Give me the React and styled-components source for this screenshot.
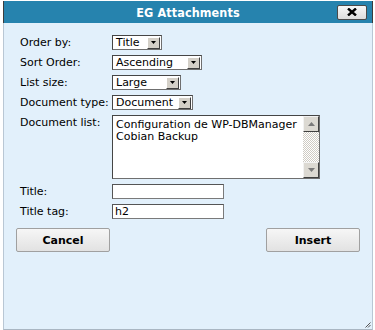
import React from "react";
import styled, { createGlobalStyle } from "styled-components";

const Global = createGlobalStyle`
  html, body { margin: 0; padding: 0; background: #fff; }
  body { font-family: "DejaVu Sans", Verdana, sans-serif; font-size: 11px; color: #000; }
  * { box-sizing: border-box; }
`;

const Page = styled.div`
  width: 375px;
  height: 330px;
  padding: 1px 2px 0 3px;
  overflow: hidden;
`;

const Dialog = styled.div`
  width: 370px;
  height: 329px;
  display: flex;
  flex-direction: column;
`;

const TitleBar = styled.div`
  height: 22px;
  flex: none;
  background: #2683ae;
  border-left: 1px solid #3c3c3c;
  border-right: 1px solid #3c3c3c;
  display: grid;
  grid-template-columns: 1fr auto 1fr;
  align-items: center;
`;

const Title = styled.div`
  grid-column: 2;
  color: #fff;
  font-family: "DejaVu Sans Condensed", "DejaVu Sans", sans-serif;
  font-stretch: condensed;
  font-weight: bold;
  font-size: 12.5px;
  letter-spacing: 0.1px;
`;

const CloseButton = styled.button`
  grid-column: 3;
  justify-self: end;
  margin-right: 5px;
  width: 30px;
  height: 15px;
  padding: 0;
  border: 1px solid #4a4a4a;
  border-radius: 2px;
  background: linear-gradient(#f7f7f7, #dcdcdc);
  display: flex;
  align-items: center;
  justify-content: center;
`;

const Content = styled.div`
  flex: 1;
  position: relative;
  background: #e2f0fb;
  border-left: 1px solid #b9c7d4;
  border-right: 1px solid #b9c7d4;
  border-bottom: 1px solid #a9b6c2;
  padding: 12px 12px 0 12px;
`;

const Form = styled.div`
  display: grid;
  grid-template-columns: 92px 1fr;
  row-gap: 5px;
  align-items: center;
  padding-left: 4px;
`;

const Label = styled.label`
  font-size: 11px;
  line-height: 13px;
  align-self: ${(p) => (p.$top ? "start" : "center")};
  padding-top: ${(p) => (p.$top ? "1px" : "0")};
`;

const SelectBox = styled.div`
  width: ${(p) => p.$w}px;
  height: 15px;
  background: #fff;
  border: 1px solid #6f6f6f;
  border-top-color: #454545;
  border-left-color: #454545;
  display: flex;
  align-items: center;
  justify-content: space-between;
  padding: 0 1px 0 3px;
  font-size: 11px;
`;

const DropButton = styled.span`
  width: 13px;
  height: 12px;
  background: #d4d0c8;
  border: 1px solid;
  border-color: #fff #404040 #404040 #fff;
  display: flex;
  align-items: center;
  justify-content: center;
`;

const ListBox = styled.div`
  width: 208px;
  height: 64px;
  background: #fff;
  border: 1px solid #6f6f6f;
  border-top-color: #454545;
  border-left-color: #454545;
  display: flex;
`;

const ListItems = styled.div`
  flex: 1;
  padding: 3px 0 0 3px;
  font-size: 11px;
  line-height: 12px;
`;

const ScrollBar = styled.div`
  width: 16px;
  display: flex;
  flex-direction: column;
  justify-content: space-between;
  background-color: #fff;
  background-image: repeating-conic-gradient(#cfcbc3 0 25%, #fff 0 50%);
  background-size: 2px 2px;
`;

const ScrollButton = styled.span`
  height: 16px;
  background: #dcd9d2;
  border: 1px solid;
  border-color: #f2f2f2 #404040 #404040 #f2f2f2;
  display: flex;
  align-items: center;
  justify-content: center;
`;

const TextInput = styled.div`
  width: 112px;
  height: 15px;
  background: #fff;
  border: 1px solid #7a7a7a;
  border-top-color: #555;
  border-left-color: #555;
  font-size: 11px;
  line-height: 13px;
  padding-left: 2px;
`;

const Buttons = styled.div`
  display: flex;
  justify-content: space-between;
  margin-top: 9px;
`;

const Button = styled.button`
  width: 94px;
  height: 24px;
  padding: 0;
  border: 1px solid #a0a0a0;
  border-radius: 2px;
  background: linear-gradient(#f6f6f6, #e2e2e2);
  font-family: "DejaVu Sans", Verdana, sans-serif;
  font-weight: bold;
  font-size: 11px;
  color: #000;
`;

const Grip = styled.svg`
  position: absolute;
  right: 1px;
  bottom: 1px;
`;

const Arrow = ({ up, color = "#000" }) => (
  <svg width="7" height="4" viewBox="0 0 7 4">
    <path d={up ? "M0 4 L3.5 0 L7 4 Z" : "M0 0 L7 0 L3.5 4 Z"} fill={color} />
  </svg>
);

const Select = ({ w, value }) => (
  <SelectBox $w={w}>
    <span>{value}</span>
    <DropButton>
      <svg width="5" height="3" viewBox="0 0 5 3">
        <path d="M0 0 H5 L2.5 3 Z" fill="#000" />
      </svg>
    </DropButton>
  </SelectBox>
);

export default function App() {
  return (
    <>
      <Global />
      <Page>
        <Dialog>
          <TitleBar>
            <Title>EG Attachments</Title>
            <CloseButton aria-label="Close">
              <svg width="10" height="8" viewBox="0 0 10 8">
                <path d="M1 0.5 L9 7.5 M9 0.5 L1 7.5" stroke="#000" strokeWidth="2.4" />
              </svg>
            </CloseButton>
          </TitleBar>
          <Content>
            <Form>
              <Label>Order by:</Label>
              <Select w={50} value="Title" />
              <Label>Sort Order:</Label>
              <Select w={90} value="Ascending" />
              <Label>List size:</Label>
              <Select w={69} value="Large" />
              <Label>Document type:</Label>
              <Select w={81} value="Document" />
              <Label $top>Document list:</Label>
              <ListBox>
                <ListItems>
                  <div>Configuration de WP-DBManager</div>
                  <div>Cobian Backup</div>
                </ListItems>
                <ScrollBar>
                  <ScrollButton>
                    <Arrow up color="#7a7a7a" />
                  </ScrollButton>
                  <ScrollButton>
                    <Arrow color="#7a7a7a" />
                  </ScrollButton>
                </ScrollBar>
              </ListBox>
              <Label>Title:</Label>
              <TextInput />
              <Label>Title tag:</Label>
              <TextInput>h2</TextInput>
            </Form>
            <Buttons>
              <Button>Cancel</Button>
              <Button>Insert</Button>
            </Buttons>
            <Grip width="6" height="6" viewBox="0 0 6 6">
              <path d="M5.5 0.5 L0.5 5.5 M5.5 3 L3 5.5" stroke="#555" strokeWidth="1" />
            </Grip>
          </Content>
        </Dialog>
      </Page>
    </>
  );
}
